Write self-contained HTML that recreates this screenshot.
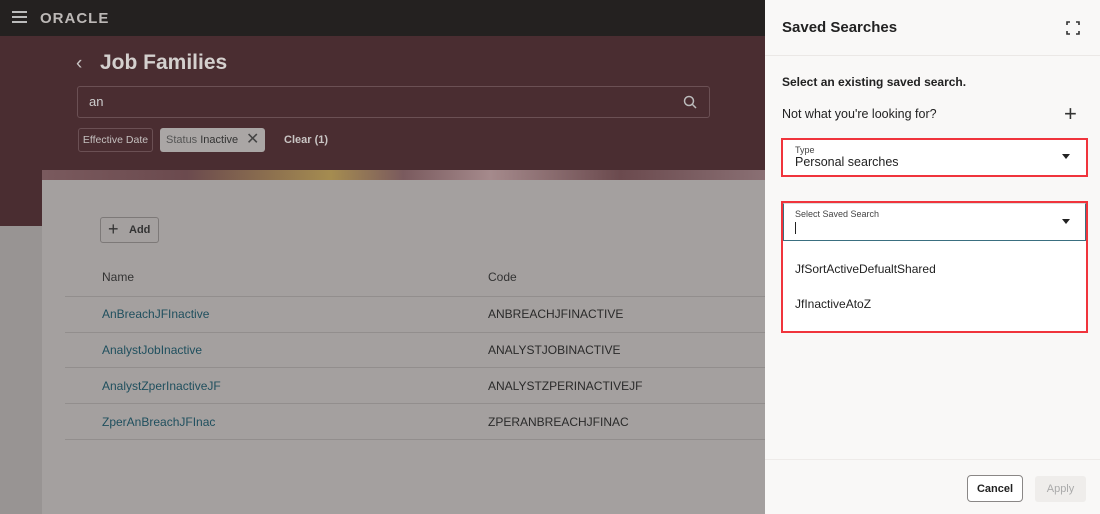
<!DOCTYPE html>
<html><head><style>
*{box-sizing:border-box;margin:0;padding:0}
body{width:1100px;height:514px;overflow:hidden;position:relative;font-family:"Liberation Sans",sans-serif;background:#989493}
.abs{position:absolute}
.c{display:flex;align-items:center;justify-content:center}
</style></head><body>
<div class="abs" style="left:0;top:0;width:765px;height:36px;background:#242120"></div>
<div class="abs" style="left:12px;top:11px;width:15px;height:2px;background:#bbb;box-shadow:0 5px 0 #bbb,0 10px 0 #bbb"></div>
<div class="abs" style="left:40px;top:10px;color:#bcb8b6;font-size:15px;letter-spacing:1px;font-weight:bold">ORACLE</div>
<div class="abs" style="left:0;top:36px;width:765px;height:190px;background:#4a2d31"></div>
<div class="abs" style="left:0;top:226px;width:765px;height:288px;background:#989493"></div>
<div class="abs" style="left:42px;top:170px;width:723px;height:10px;background:linear-gradient(90deg,#7a5a5e,#6b4a4e 20%,#a58c50 40%,#7a5a5e 50%,#a58a8c 62%,#6b4a4e 80%,#8a7074)"></div>
<div class="abs" style="left:42px;top:180px;width:723px;height:334px;background:#a4a09f"></div>
<div class="abs" style="left:76px;top:53px;color:#c9c5c4;font-size:19px">&#8249;</div>
<div class="abs" style="left:100px;top:51px;color:#d4d0ce;font-size:21px;font-weight:bold">Job Families</div>
<div class="abs" style="left:77px;top:86px;width:633px;height:32px;border:1px solid #6b5054;border-radius:3px"></div>
<div class="abs" style="left:89px;top:94px;color:#ccc;font-size:13px">an</div>
<svg class="abs" style="left:683px;top:95px" width="14" height="14"><circle cx="6" cy="6" r="4.5" fill="none" stroke="#bbb" stroke-width="1.5"/><line x1="9.5" y1="9.5" x2="13" y2="13" stroke="#bbb" stroke-width="1.5"/></svg>
<div class="abs c" style="left:78px;top:128px;width:75px;height:24px;border:1px solid #6b5054;border-radius:3px;color:#c5c0bf;font-size:10.5px">Effective Date</div>
<div class="abs" style="left:160px;top:128px;width:105px;height:24px;background:#aaa6a5;border-radius:3px;font-size:11px;line-height:24px;padding-left:6px;color:#555">Status <span style="color:#333">Inactive</span> <span style="position:absolute;left:86px;top:0;font-size:16px;color:#444">✕</span></div>
<div class="abs" style="left:284px;top:134px;color:#c9c5c4;font-size:11px;font-weight:bold">Clear (1)</div>
<div class="abs" style="left:100px;top:217px;width:59px;height:26px;border:1px solid #7d7978;border-radius:3px;font-size:11px;line-height:24px;padding-left:28px;color:#333;font-weight:bold">Add<span style="position:absolute;left:7px;top:-1px;font-size:18px;font-weight:normal">+</span></div>
<div class="abs" style="left:102px;top:270px;font-size:12px;color:#333">Name</div>
<div class="abs" style="left:488px;top:270px;font-size:12px;color:#333">Code</div>
<div class="abs" style="left:65px;top:296px;width:700px;border-top:1px solid #928e8d"></div>
<div class="abs" style="left:65px;top:332px;width:700px;border-top:1px solid #928e8d"></div>
<div class="abs" style="left:65px;top:367px;width:700px;border-top:1px solid #928e8d"></div>
<div class="abs" style="left:65px;top:403px;width:700px;border-top:1px solid #928e8d"></div>
<div class="abs" style="left:65px;top:439px;width:700px;border-top:1px solid #928e8d"></div>
<div class="abs" style="left:102px;top:307px;font-size:12px;color:#1f4f5e;line-height:36px;margin-top:-11px">AnBreachJFInactive<br>AnalystJobInactive<br>AnalystZperInactiveJF<br>ZperAnBreachJFInac</div>
<div class="abs" style="left:488px;top:307px;font-size:12px;color:#2a2a2a;line-height:36px;margin-top:-11px">ANBREACHJFINACTIVE<br>ANALYSTJOBINACTIVE<br>ANALYSTZPERINACTIVEJF<br>ZPERANBREACHJFINAC</div>

<div class="abs" style="left:765px;top:0;width:335px;height:514px;background:#f9f8f7"></div>
<div class="abs" style="left:765px;top:55px;width:335px;border-top:1px solid #ebe8e6"></div>
<div class="abs" style="left:782px;top:19px;font-size:15px;font-weight:bold;color:#222">Saved Searches</div>
<svg class="abs" style="left:1066px;top:21px" width="14" height="14" fill="none" stroke="#333" stroke-width="1.6"><path d="M1 4V1H4M10 1H13V4M13 10V13H10M4 13H1V10"/></svg>
<div class="abs" style="left:782px;top:75px;font-size:12px;font-weight:bold;color:#222">Select an existing saved search.</div>
<div class="abs" style="left:782px;top:107px;font-size:12.5px;color:#222">Not what you're looking for?</div>
<div class="abs" style="left:1064px;top:101px;font-size:22px;color:#333;font-weight:300">+</div>
<div class="abs" style="left:781px;top:138px;width:307px;height:39px;border:2px solid #f0343c;background:#fff"></div>
<div class="abs" style="left:795px;top:145px;font-size:9px;color:#444">Type</div>
<div class="abs" style="left:795px;top:155px;font-size:12.5px;color:#222">Personal searches</div>
<div class="abs" style="left:1062px;top:154px;border:4px solid transparent;border-top:5px solid #222"></div>
<div class="abs" style="left:781px;top:201px;width:307px;height:132px;border:2px solid #f0343c;background:#fff"></div>
<div class="abs" style="left:783px;top:203px;width:303px;height:38px;border:1px solid #3a6f80;border-top-color:#ddd;background:#fff"></div>
<div class="abs" style="left:795px;top:209px;font-size:9px;color:#444">Select Saved Search</div>
<div class="abs" style="left:795px;top:222px;width:1px;height:12px;background:#222"></div>
<div class="abs" style="left:1062px;top:219px;border:4px solid transparent;border-top:5px solid #222"></div>
<div class="abs" style="left:795px;top:262px;font-size:12px;color:#222">JfSortActiveDefualtShared</div>
<div class="abs" style="left:795px;top:297px;font-size:12px;color:#222">JfInactiveAtoZ</div>
<div class="abs" style="left:765px;top:459px;width:335px;border-top:1px solid #eeebe9"></div>
<div class="abs c" style="left:967px;top:475px;width:56px;height:27px;border:1px solid #8a8786;border-radius:4px;background:#fff;font-size:11px;font-weight:bold;color:#222">Cancel</div>
<div class="abs c" style="left:1035px;top:476px;width:51px;height:26px;border-radius:3px;background:#efedeb;font-size:11px;color:#aaa">Apply</div>
</body></html>
